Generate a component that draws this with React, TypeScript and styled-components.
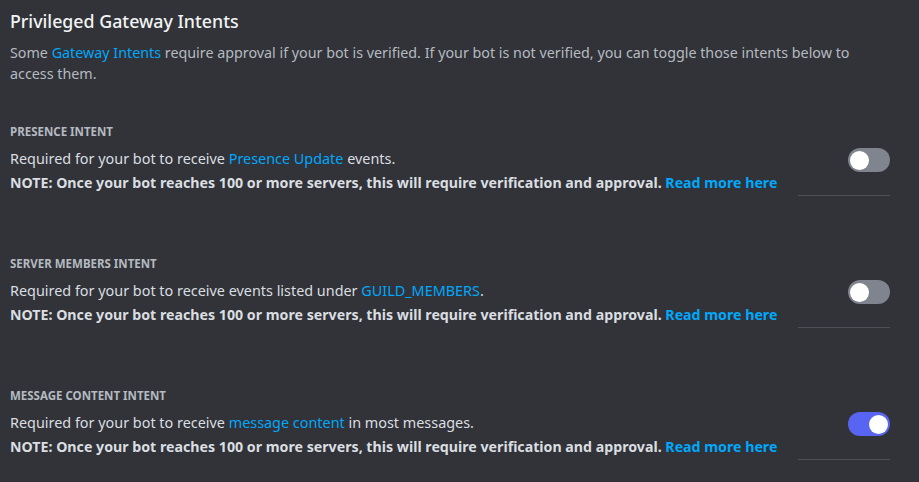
import styled, { createGlobalStyle } from "styled-components"

const GlobalStyle = createGlobalStyle`
  body {
    margin: 0;
    background: #313338;
    font-family: "Noto Sans", "Open Sans", sans-serif;
  }
`

const Page = styled.div`
  width: 919px;
  height: 482px;
  overflow: hidden;
  padding: 8px 29px 0 10px;
  box-sizing: border-box;
  background: #313338;
`

const Title = styled.h2`
  margin: 0;
  font-size: 17.8px;
  font-weight: 500;
  line-height: 26px;
  color: #f2f3f5;
`

const Description = styled.p`
  margin: 8px 0 0;
  font-size: 14.3px;
  line-height: 21px;
  color: #b5bac1;
`

const Link = styled.a<{ $bold?: boolean }>`
  color: #00a8fc;
  text-decoration: none;
  font-weight: ${(p) => (p.$bold ? 700 : 400)};
`

const Section = styled.section`
  margin-top: 60px;

  &:first-of-type {
    margin-top: 40px;
  }
`

const Label = styled.h3`
  margin: 0;
  font-size: 11.5px;
  font-weight: 700;
  line-height: 16px;
  text-transform: uppercase;
  color: #b5bac1;
`

const Row = styled.div`
  display: flex;
  justify-content: space-between;
  align-items: flex-start;
  margin-top: 7px;
`

const Text = styled.div`
  font-size: 14.4px;
  line-height: 24px;
  color: #dbdee1;
`

const Note = styled.div`
  font-weight: 700;
  font-size: 14.2px;
`

const ToggleCell = styled.div`
  flex: 0 0 92px;
  height: 49px;
  display: flex;
  justify-content: flex-end;
  padding-top: 1px;
  box-sizing: border-box;
  border-bottom: 1px solid #4e5058;
`

const Toggle = styled.div<{ $on?: boolean }>`
  width: 42px;
  height: 24px;
  border-radius: 12px;
  background: ${(p) => (p.$on ? "#5865f2" : "#80848e")};
  display: flex;
  align-items: center;
  justify-content: ${(p) => (p.$on ? "flex-end" : "flex-start")};
  padding: 0 2px;
  box-sizing: border-box;
`

const Knob = styled.div`
  width: 19px;
  height: 19px;
  border-radius: 50%;
  background: #ffffff;
`

const intents = [
  { label: "Presence Intent", pre: "Required for your bot to receive ", link: "Presence Update", post: " events.", on: false },
  { label: "Server Members Intent", pre: "Required for your bot to receive events listed under ", link: "GUILD_MEMBERS", post: ".", on: false },
  { label: "Message Content Intent", pre: "Required for your bot to receive ", link: "message content", post: " in most messages.", on: true },
]

export default function App() {
  return (
    <>
      <GlobalStyle />
      <Page>
        <Title>Privileged Gateway Intents</Title>
        <Description>
          Some <Link href="#">Gateway Intents</Link> require approval if your bot is verified. If your bot is not verified, you can toggle those intents below to access them.
        </Description>
        {intents.map((item) => (
          <Section key={item.label}>
            <Label>{item.label}</Label>
            <Row>
              <Text>
                {item.pre}<Link href="#">{item.link}</Link>{item.post}
                <Note>
                  NOTE: Once your bot reaches 100 or more servers, this will require verification and approval. <Link href="#" $bold>Read more here</Link>
                </Note>
              </Text>
              <ToggleCell>
                <Toggle $on={item.on}>
                  <Knob />
                </Toggle>
              </ToggleCell>
            </Row>
          </Section>
        ))}
      </Page>
    </>
  )
}
